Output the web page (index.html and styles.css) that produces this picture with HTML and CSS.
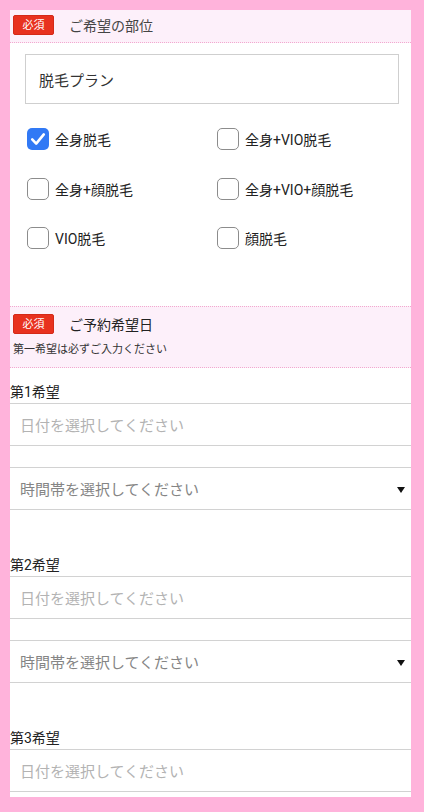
FILE: index.html
```html
<!DOCTYPE html>
<html lang="ja">
<head>
    <meta charset="UTF-8">
    <meta name="viewport" content="width=device-width, initial-scale=1.0">
    <title>ご予約フォーム</title>
    <link rel="stylesheet" href="styles.css">
</head>
<body>
    <div class="frame">
        <div class="section-head">
            <div class="head-row">
                <span class="badge">必須</span>
                <span class="head-title">ご希望の部位</span>
            </div>
        </div>

        <div class="parts">
            <div class="plan-box">脱毛プラン</div>

            <div class="options">
                <label class="opt">
                    <span class="box checked">
                        <svg width="22" height="22" viewBox="0 0 22 22"><path d="M5.2 11.4 L9.2 15.6 L16.8 6.4" fill="none" stroke="#fff" stroke-width="2.6" stroke-linecap="round" stroke-linejoin="round"/></svg>
                    </span>
                    全身脱毛
                </label>
                <label class="opt"><span class="box"></span>全身+VIO脱毛</label>
                <label class="opt"><span class="box"></span>全身+顔脱毛</label>
                <label class="opt"><span class="box"></span>全身+VIO+顔脱毛</label>
                <label class="opt"><span class="box"></span>VIO脱毛</label>
                <label class="opt"><span class="box"></span>顔脱毛</label>
            </div>
        </div>

        <div class="section-head date-head">
            <div class="head-row">
                <span class="badge">必須</span>
                <span class="head-title dark">ご予約希望日</span>
            </div>
            <p class="head-note">第一希望は必ずご入力ください</p>
        </div>

        <div class="wish">
            <div class="wish-label">第1希望</div>
            <div class="field placeholder">日付を選択してください</div>
            <div class="field select">時間帯を選択してください<span class="arrow"></span></div>
        </div>

        <div class="wish">
            <div class="wish-label">第2希望</div>
            <div class="field placeholder">日付を選択してください</div>
            <div class="field select">時間帯を選択してください<span class="arrow"></span></div>
        </div>

        <div class="wish">
            <div class="wish-label">第3希望</div>
            <div class="field placeholder">日付を選択してください</div>
        </div>
    </div>
</body>
</html>
```

FILE: styles.css
```css
body {
    margin: 0;
    background-color: #ffb3db;
    font-family: Roboto, 'Noto Sans CJK JP', sans-serif;
    color: #222;
}
.frame {
    width: 401px;
    height: 787px;
    margin: 10px;
    background-color: #fff;
    overflow: hidden;
}
.section-head {
    background-color: #fdf0fa;
    border-bottom: 1px dotted #f2a9cf;
    padding: 5px 3px 0;
    height: 27px;
}
.head-row {
    display: flex;
    align-items: center;
    height: 20px;
}
.badge {
    display: inline-flex;
    align-items: center;
    justify-content: center;
    width: 39px;
    height: 18px;
    background-color: #e8321f;
    border: 1px solid #d42a18;
    border-radius: 2px;
    color: #fff;
    font-size: 11px;
    line-height: 1;
}
.head-title {
    margin-left: 15px;
    font-size: 14px;
    color: #444;
}
.head-title.dark {
    color: #222;
}
.date-head {
    border-top: 1px dotted #f2a9cf;
    height: 53px;
    padding-top: 7px;
}
.head-note {
    margin: 8px 0 0;
    font-size: 11px;
    line-height: 16px;
    color: #333;
}
.parts {
    padding: 11px 12px 57px 15px;
}
.plan-box {
    height: 48px;
    border: 1px solid #cfcfcf;
    padding-left: 13px;
    display: flex;
    align-items: center;
    font-size: 15px;
    color: #333;
}
.options {
    display: grid;
    grid-template-columns: 190px 1fr;
    grid-auto-rows: 22px;
    row-gap: 27.5px;
    margin-top: 24px;
    padding-left: 2px;
}
.opt {
    display: flex;
    align-items: center;
    font-size: 14px;
    color: #222;
}
.box {
    width: 22px;
    height: 22px;
    box-sizing: border-box;
    border: 1.5px solid #8c8c8c;
    border-radius: 5px;
    margin-right: 6px;
    flex-shrink: 0;
}
.box.checked {
    background-color: #3179f5;
    border: none;
}
.box svg {
    display: block;
}
.wish {
    margin-top: 44px;
}
.date-head + .wish {
    margin-top: 13px;
}
.wish-label {
    font-size: 14px;
    line-height: 22px;
    color: #222;
}
.field {
    height: 41px;
    border-top: 1px solid #d2d2d2;
    border-bottom: 1px solid #d2d2d2;
    padding: 0 6px 0 10px;
    display: flex;
    align-items: center;
    font-size: 15px;
}
.placeholder {
    color: #b3b3b3;
}
.select {
    margin-top: 21px;
    color: #858585;
    justify-content: space-between;
}
.arrow {
    width: 0;
    height: 0;
    border-left: 4px solid transparent;
    border-right: 4px solid transparent;
    border-top: 6px solid #111;
    margin-top: 2px;
}
```
